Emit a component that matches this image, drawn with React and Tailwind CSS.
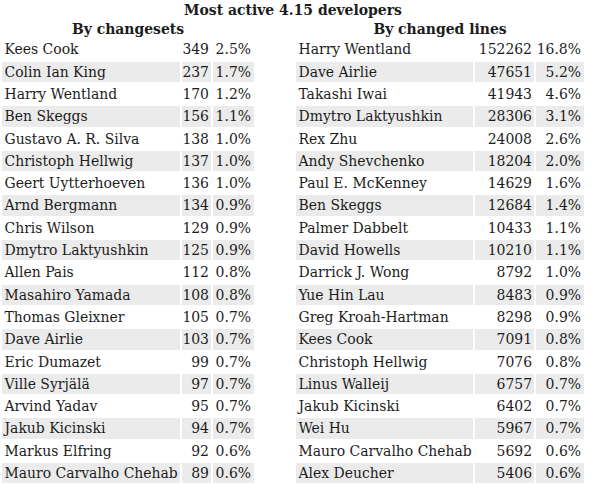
const BY_CHANGESETS = [
  ['Kees Cook', '349', '2.5%'],
  ['Colin Ian King', '237', '1.7%'],
  ['Harry Wentland', '170', '1.2%'],
  ['Ben Skeggs', '156', '1.1%'],
  ['Gustavo A. R. Silva', '138', '1.0%'],
  ['Christoph Hellwig', '137', '1.0%'],
  ['Geert Uytterhoeven', '136', '1.0%'],
  ['Arnd Bergmann', '134', '0.9%'],
  ['Chris Wilson', '129', '0.9%'],
  ['Dmytro Laktyushkin', '125', '0.9%'],
  ['Allen Pais', '112', '0.8%'],
  ['Masahiro Yamada', '108', '0.8%'],
  ['Thomas Gleixner', '105', '0.7%'],
  ['Dave Airlie', '103', '0.7%'],
  ['Eric Dumazet', '99', '0.7%'],
  ['Ville Syrjälä', '97', '0.7%'],
  ['Arvind Yadav', '95', '0.7%'],
  ['Jakub Kicinski', '94', '0.7%'],
  ['Markus Elfring', '92', '0.6%'],
  ['Mauro Carvalho Chehab', '89', '0.6%'],
];

const BY_LINES = [
  ['Harry Wentland', '152262', '16.8%'],
  ['Dave Airlie', '47651', '5.2%'],
  ['Takashi Iwai', '41943', '4.6%'],
  ['Dmytro Laktyushkin', '28306', '3.1%'],
  ['Rex Zhu', '24008', '2.6%'],
  ['Andy Shevchenko', '18204', '2.0%'],
  ['Paul E. McKenney', '14629', '1.6%'],
  ['Ben Skeggs', '12684', '1.4%'],
  ['Palmer Dabbelt', '10433', '1.1%'],
  ['David Howells', '10210', '1.1%'],
  ['Darrick J. Wong', '8792', '1.0%'],
  ['Yue Hin Lau', '8483', '0.9%'],
  ['Greg Kroah-Hartman', '8298', '0.9%'],
  ['Kees Cook', '7091', '0.8%'],
  ['Christoph Hellwig', '7076', '0.8%'],
  ['Linus Walleij', '6757', '0.7%'],
  ['Jakub Kicinski', '6402', '0.7%'],
  ['Wei Hu', '5967', '0.7%'],
  ['Mauro Carvalho Chehab', '5692', '0.6%'],
  ['Alex Deucher', '5406', '0.6%'],
];

// one ranking table: heading + 3-column striped grid
const DevTable = ({ title, rows, cols }) => (
  <div className="flex flex-col">
    <h3 className="text-center font-bold leading-[18px] h-[18px]">{title}</h3>
    <div className={`grid ${cols} auto-rows-[20.3px] gap-[2px] mt-[1.4px]`}>
      {rows.map(([name, count, pct], i) => {
        const bg = i % 2 === 1 ? 'bg-[#ebebeb]' : '';
        return [
          <div key={`n${i}`} className={`${bg} pl-[2.5px] leading-[20.3px] whitespace-nowrap`}>{name}</div>,
          <div key={`c${i}`} className={`${bg} pr-[2px] text-right leading-[20.3px]`}>{count}</div>,
          <div key={`p${i}`} className={`${bg} pr-[3px] text-right leading-[20.3px]`}>{pct}</div>,
        ];
      })}
    </div>
  </div>
);

const App = () => (
  <div className="min-h-screen bg-white text-[#1c1c1c] text-[15.5px] font-['DejaVu_Serif_Condensed','DejaVu_Serif',serif] pt-[1px]">
    <div className="ml-[2px] w-[582px]">
      <h2 className="text-center font-bold leading-[18px] h-[18px]">Most active 4.15 developers</h2>
      <div className="flex justify-between mt-[1px]">
        <DevTable title="By changesets" rows={BY_CHANGESETS} cols="grid-cols-[178px_29px_41px]" />
        <DevTable title="By changed lines" rows={BY_LINES} cols="grid-cols-[177px_59px_48px]" />
      </div>
    </div>
  </div>
);

export default App;
